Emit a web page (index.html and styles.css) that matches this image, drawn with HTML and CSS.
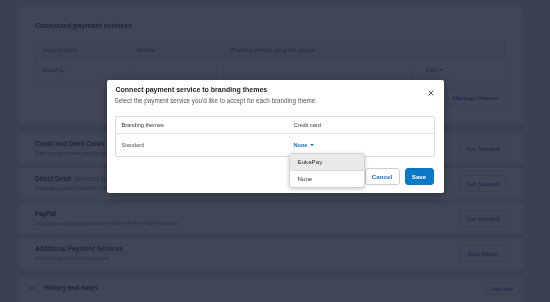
FILE: index.html
```html
<!DOCTYPE html>
<html lang="en">
<head>
    <meta charset="UTF-8">
    <meta name="viewport" content="width=device-width, initial-scale=1.0">
    <title>Payment services</title>
    <link rel="stylesheet" href="styles.css">
</head>
<body>
    <div class="page">
        <div class="card connected">
            <h2 class="card-title">Connected payment services</h2>
            <div class="services-table">
                <div class="services-row services-head">
                    <div class="cell">Account name</div>
                    <div class="cell">Service</div>
                    <div class="cell">Branding themes using this service</div>
                    <div class="cell"></div>
                </div>
                <div class="services-row">
                    <div class="cell">EukaPay</div>
                    <div class="cell"></div>
                    <div class="cell"></div>
                    <div class="cell cell-edit"><span class="link">Edit <span class="caret"></span></span></div>
                </div>
            </div>
            <div class="card-actions">
                <button class="btn">Manage themes</button>
            </div>
        </div>

        <div class="card service">
            <div class="service-text">
                <h3 class="service-title">Credit and Debit Cards</h3>
                <p class="service-desc">Make paying invoices easy by accepting credit and debit cards online.</p>
            </div>
            <button class="btn">Get Started</button>
        </div>

        <div class="card service">
            <div class="service-text">
                <h3 class="service-title">Direct Debit <span class="powered">powered by GoCardless</span></h3>
                <p class="service-desc">Automate payment collection from your customers' bank accounts.</p>
            </div>
            <button class="btn">Get Started</button>
        </div>

        <div class="card service">
            <div class="service-text">
                <h3 class="service-title">PayPal</h3>
                <p class="service-desc">Let your customers pay invoices instantly with their PayPal account.</p>
            </div>
            <button class="btn">Get Started</button>
        </div>

        <div class="card service">
            <div class="service-text">
                <h3 class="service-title">Additional Payment Services</h3>
                <p class="service-desc">Add other payment service options.</p>
            </div>
            <button class="btn">Add Other</button>
        </div>

        <div class="card history">
            <span class="chevron"></span>
            <h3 class="history-title">History and notes</h3>
            <button class="btn btn-small">Add note</button>
        </div>
    </div>

    <div class="overlay">
        <div class="modal">
            <div class="modal-header">
                <h2 class="modal-title">Connect payment service to branding themes</h2>
                <button class="modal-close" aria-label="Close">
                    <svg width="6" height="6" viewBox="0 0 6 6"><path d="M0.7 0.7L5.3 5.3M5.3 0.7L0.7 5.3" stroke="#444" stroke-width="0.9"/></svg>
                </button>
            </div>
            <p class="modal-subtitle">Select the payment service you'd like to accept for each branding theme.</p>

            <div class="themes-table">
                <div class="themes-row themes-head">
                    <div class="themes-name">Branding themes</div>
                    <div class="themes-card">Credit card</div>
                </div>
                <div class="themes-row">
                    <div class="themes-name muted">Standard</div>
                    <div class="themes-card">
                        <span class="link">None <span class="caret"></span></span>
                        <ul class="dropdown">
                            <li class="dropdown-item active">EukaPay</li>
                            <li class="dropdown-item">None</li>
                        </ul>
                    </div>
                </div>
            </div>

            <div class="modal-footer">
                <button class="btn-cancel">Cancel</button>
                <button class="btn-save">Save</button>
            </div>
        </div>
    </div>
</body>
</html>
```

FILE: styles.css
```css
body {
    margin: 0;
    background: #d5d9e3;
    color: #1c2433;
    font-family: 'Liberation Sans', Arial, sans-serif;
    overflow: hidden;
}

h2, h3, p, ul {
    margin: 0;
    padding: 0;
}

button {
    font-family: inherit;
}

.page {
    display: flex;
    flex-direction: column;
    gap: 4px;
    width: 504px;
    padding: 7px 0 0 19px;
}

.card {
    background: #ffffff;
    border-radius: 3px;
    box-sizing: border-box;
}

.card-title {
    font-size: 7px;
    font-weight: bold;
    line-height: 8px;
    color: #1c2433;
}

.connected {
    height: 117px;
    padding: 15px 17px 0 16px;
    margin-bottom: 5px;
}

.services-table {
    margin-top: 10px;
    border: 1px solid #e1e4e9;
}

.services-row {
    display: grid;
    grid-template-columns: 94px 94px 189px 1fr;
    height: 22px;
    font-size: 5.4px;
    color: #3a4350;
}

.services-head {
    height: 17px;
    background: #eef0f3;
    border-bottom: 1px solid #e1e4e9;
}

.services-row .cell {
    display: flex;
    align-items: center;
    padding-left: 7px;
    border-right: 1px solid #e1e4e9;
}

.services-head .cell {
    border-right: none;
}

.services-row .cell:last-child {
    border-right: none;
}

.cell-edit {
    padding-left: 13px !important;
}

.card-actions {
    display: flex;
    justify-content: flex-end;
    margin-top: 7px;
}

.btn {
    height: 17px;
    padding: 0 6px;
    background: #ffffff;
    border: 1px solid #cfd4dc;
    border-radius: 3px;
    color: #1a5fb4;
    font-size: 6.2px;
    font-weight: bold;
}

.service {
    height: 31px;
    display: flex;
    align-items: center;
    justify-content: space-between;
    padding: 0 17px 0 16px;
}

.service .btn {
    width: 47px;
    padding: 0;
}

.service-title {
    font-size: 6.4px;
    font-weight: bold;
    line-height: 8px;
}

.powered {
    font-weight: normal;
    color: #5a6472;
    margin-left: 2px;
}

.service-desc {
    margin-top: 2px;
    font-size: 4.8px;
    line-height: 7px;
    color: #5a6472;
}

.history {
    height: 30px;
    margin-top: 4px;
    display: flex;
    align-items: flex-start;
    padding: 5px 3px 0 11px;
}

.chevron {
    width: 3px;
    height: 3px;
    margin-top: 3px;
    border-right: 1px solid #4a5563;
    border-bottom: 1px solid #4a5563;
    transform: rotate(45deg);
}

.history-title {
    flex: 1;
    margin-left: 10px;
    margin-top: 2px;
    font-size: 6.4px;
    font-weight: bold;
    line-height: 8px;
}

.btn-small {
    height: 13px;
    width: 35px;
    padding: 0;
    font-size: 5px;
}

.link {
    color: #1a6fc0;
    font-weight: bold;
    display: inline-flex;
    align-items: center;
    gap: 3px;
}

.caret {
    width: 0;
    height: 0;
    border-left: 2px solid transparent;
    border-right: 2px solid transparent;
    border-top: 2.5px solid currentColor;
}

/* modal */
.overlay {
    position: fixed;
    inset: 0;
    background: rgba(30, 38, 56, 0.85);
    display: flex;
    justify-content: center;
    align-items: flex-start;
    padding-top: 80px;
}

.modal {
    width: 337px;
    height: 113px;
    box-sizing: border-box;
    background: #ffffff;
    border-radius: 2px;
    padding: 5px 9px 8px 8px;
    color: #222;
    box-shadow: 0 2px 10px rgba(0, 0, 0, 0.3);
}

.modal-header {
    display: flex;
    justify-content: space-between;
    align-items: flex-start;
    height: 10px;
    padding-left: 1px;
}

.modal-title {
    font-size: 7px;
    font-weight: bold;
    line-height: 10px;
    color: #1d1d1d;
}

.modal-close {
    width: 10px;
    height: 10px;
    padding: 0;
    margin-top: 3px;
    margin-right: -1px;
    border: none;
    background: none;
    display: flex;
    align-items: center;
    justify-content: center;
}

.modal-subtitle {
    margin-top: 2px;
    font-size: 6.3px;
    line-height: 8px;
    color: #555;
}

.themes-table {
    margin-top: 11px;
    border: 1px solid #dcdcdc;
    border-radius: 2px;
}

.themes-row {
    display: grid;
    grid-template-columns: 178px 1fr;
    height: 22px;
    align-items: center;
    font-size: 5.6px;
}

.themes-head {
    height: 16px;
    border-bottom: 1px solid #e2e2e2;
    color: #333;
}

.themes-name {
    padding-left: 6px;
}

.muted {
    color: #555;
}

.themes-card {
    position: relative;
}

.dropdown {
    position: absolute;
    top: 11px;
    left: -5px;
    width: 76px;
    box-sizing: border-box;
    list-style: none;
    background: #ffffff;
    border: 1px solid #cfcfcf;
    border-radius: 3px;
    box-shadow: 0 1px 4px rgba(0, 0, 0, 0.2);
    overflow: hidden;
    z-index: 2;
}

.dropdown-item {
    height: 16px;
    line-height: 16px;
    padding-left: 8px;
    font-size: 6.2px;
    color: #333;
}

.dropdown-item.active {
    background: #e9e9e9;
    border-bottom: 1px solid #dcdcdc;
}

.modal-footer {
    display: flex;
    justify-content: flex-end;
    gap: 5px;
    margin-top: 11px;
    margin-right: 1px;
}

.btn-cancel,
.btn-save {
    height: 17px;
    border-radius: 3px;
    font-size: 6.2px;
    font-weight: bold;
    padding: 0;
}

.btn-cancel {
    width: 35px;
    background: #ffffff;
    border: 1px solid #cfcfcf;
    color: #1a6fc0;
}

.btn-save {
    width: 29px;
    background: #0b78c6;
    border: 1px solid #0b78c6;
    color: #ffffff;
}
```
